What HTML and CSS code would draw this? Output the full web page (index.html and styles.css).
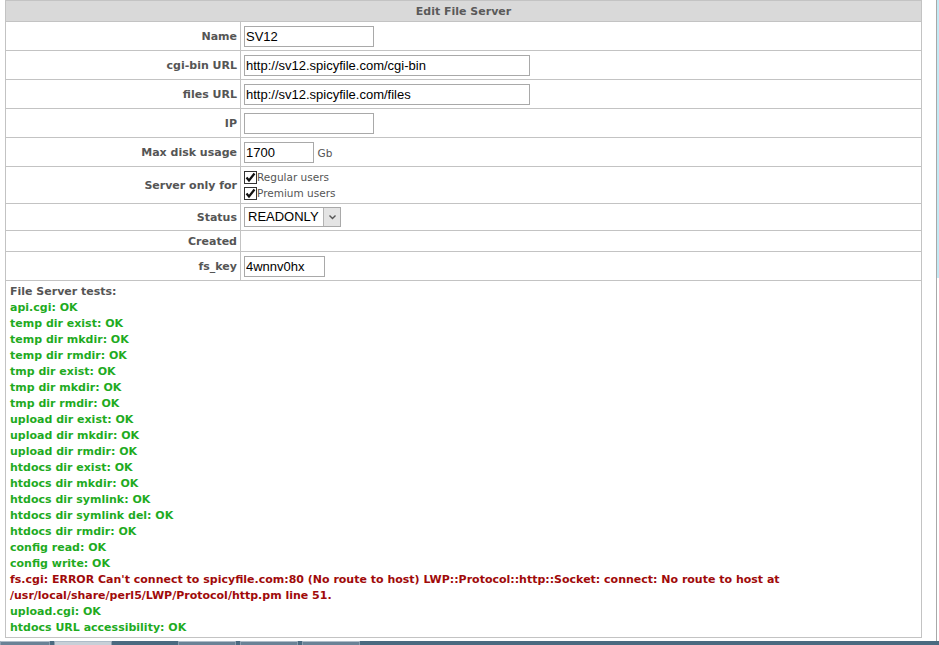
FILE: index.html
```html
<!DOCTYPE html>
<html lang="en">
<head>
  <meta charset="UTF-8">
  <title>Edit File Server</title>
  <link rel="stylesheet" href="styles.css">
</head>
<body>

  <form class="edit-form">
    <table class="tbl">
      <tr class="hdr">
        <th colspan="2">Edit File Server</th>
      </tr>
      <tr class="row">
        <td class="lbl">Name</td>
        <td><input type="text" class="inp short" value="SV12"></td>
      </tr>
      <tr class="row">
        <td class="lbl">cgi-bin URL</td>
        <td><input type="text" class="inp long" value="http://sv12.spicyfile.com/cgi-bin"></td>
      </tr>
      <tr class="row">
        <td class="lbl">files URL</td>
        <td><input type="text" class="inp long" value="http://sv12.spicyfile.com/files"></td>
      </tr>
      <tr class="row">
        <td class="lbl">IP</td>
        <td><input type="text" class="inp short" value=""></td>
      </tr>
      <tr class="row">
        <td class="lbl">Max disk usage</td>
        <td><input type="text" class="inp disk" value="1700"> <span class="unit">Gb</span></td>
      </tr>
      <tr class="row tall">
        <td class="lbl">Server only for</td>
        <td>
          <label class="chk"><span class="box"><svg width="11" height="11" viewBox="0 0 11 11"><path d="M1.5 5.5 L4 8.5 L9.5 1.5" fill="none" stroke="#111" stroke-width="2.2"/></svg></span>Regular users</label>
          <label class="chk"><span class="box"><svg width="11" height="11" viewBox="0 0 11 11"><path d="M1.5 5.5 L4 8.5 L9.5 1.5" fill="none" stroke="#111" stroke-width="2.2"/></svg></span>Premium users</label>
        </td>
      </tr>
      <tr class="row status">
        <td class="lbl">Status</td>
        <td>
          <span class="sel">
            <span class="sel-val">READONLY</span>
            <span class="sel-btn"><svg width="7" height="5" viewBox="0 0 7 5"><path d="M0.5 0.5 L3.5 3.5 L6.5 0.5" fill="none" stroke="#555" stroke-width="1.4"/></svg></span>
          </span>
        </td>
      </tr>
      <tr class="row small">
        <td class="lbl">Created</td>
        <td></td>
      </tr>
      <tr class="row">
        <td class="lbl">fs_key</td>
        <td><input type="text" class="inp key" value="4wnnv0hx"></td>
      </tr>
      <tr>
        <td colspan="2" class="tests">
          <div class="ttl">File Server tests:</div>
          <div class="ok">api.cgi: OK</div>
          <div class="ok">temp dir exist: OK</div>
          <div class="ok">temp dir mkdir: OK</div>
          <div class="ok">temp dir rmdir: OK</div>
          <div class="ok">tmp dir exist: OK</div>
          <div class="ok">tmp dir mkdir: OK</div>
          <div class="ok">tmp dir rmdir: OK</div>
          <div class="ok">upload dir exist: OK</div>
          <div class="ok">upload dir mkdir: OK</div>
          <div class="ok">upload dir rmdir: OK</div>
          <div class="ok">htdocs dir exist: OK</div>
          <div class="ok">htdocs dir mkdir: OK</div>
          <div class="ok">htdocs dir symlink: OK</div>
          <div class="ok">htdocs dir symlink del: OK</div>
          <div class="ok">htdocs dir rmdir: OK</div>
          <div class="ok">config read: OK</div>
          <div class="ok">config write: OK</div>
          <div class="err">fs.cgi: ERROR Can't connect to spicyfile.com:80 (No route to host) LWP::Protocol::http::Socket: connect: No route to host at<br>/usr/local/share/perl5/LWP/Protocol/http.pm line 51.</div>
          <div class="ok">upload.cgi: OK</div>
          <div class="ok">htdocs URL accessibility: OK</div>
        </td>
      </tr>
    </table>
  </form>

  <div class="win-edge"></div>

  <div class="taskbar">
    <span class="task t1"></span>
    <span class="task t2"></span>
    <span class="task t3"></span>
    <span class="task t4"></span>
    <span class="task t5"></span>
  </div>

</body>
</html>
```

FILE: styles.css
```css
* {
  box-sizing: border-box;
}

body {
  margin: 0 0 0 5px;
  background: #fff;
  font-family: 'DejaVu Sans', Verdana, sans-serif;
  font-size: 11px;
  color: #555;
}

.tbl {
  width: 917px;
  border-collapse: collapse;
  border: 1px solid #c3c3c3;
}

.tbl th,
.tbl td {
  border: 1px solid #c3c3c3;
  padding: 0 3px;
  vertical-align: middle;
}

.hdr th {
  height: 21px;
  background: #d9d9d9;
  font-weight: bold;
  text-align: center;
  color: #5a5a5a;
}

.row td {
  height: 29px;
}

.row.tall td {
  height: 37px;
}

.row.status td {
  height: 27px;
}

.row.small td {
  height: 21px;
}

.lbl {
  width: 235px;
  text-align: right;
  font-weight: bold;
  white-space: nowrap;
}

.inp {
  height: 21px;
  padding: 1px 1px;
  margin: 0;
  border: 1px solid #a9a9a9;
  font-family: 'Liberation Sans', Arial, sans-serif;
  font-size: 13px;
  color: #000;
  vertical-align: middle;
}

.short { width: 130px; }
.long { width: 286px; }
.disk { width: 70px; }
.key { width: 81px; }

.unit {
  font-size: 10.5px;
  vertical-align: middle;
}

.chk {
  display: flex;
  align-items: center;
  height: 15px;
  margin-top: 1px;
  font-size: 10.5px;
  line-height: 15px;
}

.box {
  display: inline-flex;
  align-items: center;
  justify-content: center;
  width: 13px;
  height: 13px;
  border: 1px solid #333;
  background: #fff;
}

.sel {
  display: inline-flex;
  height: 20px;
  width: 97px;
  border: 1px solid #a9a9a9;
  vertical-align: middle;
}

.sel-val {
  flex: 1;
  padding-left: 3px;
  font-family: 'Liberation Sans', Arial, sans-serif;
  font-size: 13px;
  line-height: 18px;
  color: #000;
}

.sel-btn {
  display: flex;
  align-items: center;
  justify-content: center;
  width: 17px;
  background: #e4e4e4;
  border-left: 1px solid #b4b4b4;
}

/* test results */
.tests {
  padding: 3px 4px 1px !important;
  font-weight: bold;
  line-height: 16px;
}

.ttl { color: #555; }
.ok { color: #1fab1f; }
.err { color: #a00a0a; }

.win-edge {
  position: fixed;
  top: 0;
  right: 0;
  width: 3px;
  height: 641px;
  border-left: 1px solid #a8a8a8;
  background: linear-gradient(#c4e9f4 0, #c4e9f4 278px, #fff 278px);
}

.taskbar {
  position: fixed;
  left: 0;
  right: 0;
  bottom: 0;
  height: 4px;
  background: #4a6a80;
}

.task {
  position: absolute;
  top: 0;
  height: 4px;
  border-top: 1px solid #aebcc8;
  border-left: 1px solid #8ea0b0;
  border-right: 1px solid #8ea0b0;
  background: #6a8296;
}

.t1 { left: 0; width: 50px; }
.t2 { left: 54px; width: 58px; background: #c8d0d8; }
.t3 { left: 178px; width: 58px; }
.t4 { left: 240px; width: 58px; }
.t5 { left: 302px; width: 58px; }
```
